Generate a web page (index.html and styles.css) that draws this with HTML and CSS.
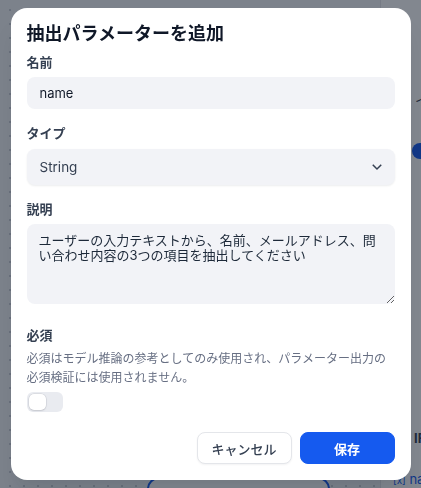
FILE: index.html
```html
<!DOCTYPE html>
<html lang="ja">
<head>
<meta charset="utf-8">
<title>抽出パラメーターを追加</title>
<link rel="stylesheet" href="styles.css">
</head>
<body>
<div class="app">
  <div class="canvas">
    <div class="node"></div>
  </div>
  <div class="panel">
    <div class="panel-row row-a">イ</div>
    <div class="panel-row row-b"><span class="blue-dot"></span></div>
    <div class="panel-row row-c">IF</div>
    <div class="panel-row row-d"><span class="var">[x]</span> name</div>
  </div>
</div>

<div class="overlay">
  <div class="modal">
    <h2 class="title">抽出パラメーターを追加</h2>

    <div class="field field-first">
      <div class="label">名前</div>
      <input class="input" type="text" value="name">
    </div>

    <div class="field">
      <div class="label">タイプ</div>
      <div class="select">
        <span class="select-text">String</span>
        <svg class="chev" viewBox="0 0 24 24" width="18" height="18"><path d="M12 13.1717L16.9497 8.22192L18.3639 9.63614L12 16.0001L5.63605 9.63614L7.05026 8.22192L12 13.1717Z" fill="currentColor"/></svg>
      </div>
    </div>

    <div class="field">
      <div class="label">説明</div>
      <textarea class="textarea">ユーザーの入力テキストから、名前、メールアドレス、問い合わせ内容の3つの項目を抽出してください</textarea>
    </div>

    <div class="field field-req">
      <div class="label">必須</div>
      <p class="help">必須はモデル推論の参考としてのみ使用され、パラメーター出力の必須検証には使用されません。</p>
      <div class="toggle"><span class="knob"></span></div>
    </div>

    <div class="actions">
      <button class="btn btn-secondary">キャンセル</button>
      <button class="btn btn-primary">保存</button>
    </div>
  </div>
</div>
</body>
</html>
```

FILE: styles.css
```css
* { box-sizing: border-box; }

html, body {
  margin: 0;
  padding: 0;
  height: 100%;
}

body {
  font-family: Inter, "Noto Sans CJK JP", sans-serif;
  color: #101828;
  overflow: hidden;
}

.app {
  display: flex;
  height: 100vh;
  overflow: hidden;
}

.canvas {
  position: relative;
  flex: 1;
  overflow: hidden;
  background-color: #f2f4f7;
  background-image: radial-gradient(#c9ced6 1px, transparent 1.2px);
  background-size: 14px 14px;
  background-position: 3px 3px;
}

.node {
  position: absolute;
  left: 147px;
  top: 477px;
  width: 183px;
  height: 40px;
  border: 2px solid #155aef;
  border-radius: 12px;
  background: #ffffff;
}

.panel {
  width: 41px;
  background: #ffffff;
  border-left: 1px solid #e5e7eb;
  overflow: hidden;
  display: flex;
  flex-direction: column;
  font-size: 13px;
  line-height: 18px;
  color: #354052;
  white-space: nowrap;
}

.row-a { margin-top: 91px; padding-left: 34px; }
.row-b { margin-top: 34px; padding-left: 31px; height: 18px; }
.blue-dot {
  display: inline-block;
  width: 16px;
  height: 16px;
  border-radius: 50%;
  background: #155aef;
}
.row-c { margin-top: 268px; padding-left: 33px; font-weight: 700; }
.row-d { margin-top: 23px; padding-left: 12px; color: #155aef; }
.var { font-size: 10px; }

.overlay {
  position: fixed;
  inset: 0;
  background: rgba(16, 24, 40, 0.52);
  display: flex;
  align-items: center;
  justify-content: center;
}

.modal {
  width: 400px;
  background: #ffffff;
  border-radius: 16px;
  padding: 14px 16px 16px;
  box-shadow: 0 20px 24px -4px rgba(16, 24, 40, 0.08), 0 8px 8px -4px rgba(16, 24, 40, 0.03);
  display: flex;
  flex-direction: column;
}

.title {
  margin: 0;
  font-size: 18px;
  line-height: 24px;
  font-weight: 700;
  color: #101828;
}

.field {
  display: flex;
  flex-direction: column;
  margin-top: 14px;
}

.field-first { margin-top: 6px; }
.field-req { margin-top: 21px; }

.label {
  font-size: 13px;
  line-height: 20px;
  font-weight: 700;
  color: #354052;
  margin-bottom: 5px;
}

.field-req .label { margin-bottom: 4px; }

.input {
  height: 32px;
  border: none;
  outline: none;
  border-radius: 8px;
  background: #f2f3f7;
  padding: 0 13px;
  font-family: Inter, "Noto Sans CJK JP", sans-serif;
  font-size: 13px;
  color: #101828;
}

.select {
  height: 36px;
  border-radius: 8px;
  background: #f2f3f7;
  box-shadow: 0 1px 2px rgba(16, 24, 40, 0.08);
  display: flex;
  align-items: center;
  justify-content: space-between;
  padding: 0 9px 0 13px;
  margin-top: 1px;
}

.select-text {
  font-size: 13.5px;
  color: #354052;
}

.chev { color: #354052; }

.textarea {
  height: 80px;
  border: none;
  outline: none;
  border-radius: 8px;
  background: #f2f3f7;
  padding: 9px 12px;
  font-family: Inter, "Noto Sans CJK JP", sans-serif;
  font-size: 13px;
  line-height: 15px;
  color: #1d2939;
  resize: vertical;
}

.help {
  margin: 0;
  font-size: 12px;
  line-height: 19px;
  color: #676f83;
}

.toggle {
  margin-top: 5px;
  width: 36px;
  height: 20px;
  border-radius: 6px;
  background: #e9ebf0;
  padding: 2px;
  display: flex;
}

.knob {
  width: 17px;
  height: 16px;
  border-radius: 5px;
  background: #ffffff;
  box-shadow: 0 0 0 0.5px rgba(16, 24, 40, 0.12), 0 1px 2px rgba(16, 24, 40, 0.1);
}

.actions {
  margin-top: 20px;
  display: flex;
  justify-content: flex-end;
  gap: 8px;
}

.btn {
  width: 95px;
  height: 32px;
  border-radius: 8px;
  font-family: Inter, "Noto Sans CJK JP", sans-serif;
  font-size: 13px;
  font-weight: 500;
  cursor: pointer;
}

.btn-secondary {
  background: #ffffff;
  border: 1px solid #e4e6ea;
  color: #354052;
  box-shadow: 0 1px 2px rgba(16, 24, 40, 0.05);
}

.btn-primary {
  background: #155aef;
  border: 1px solid #155aef;
  color: #ffffff;
  font-weight: 600;
}
```
